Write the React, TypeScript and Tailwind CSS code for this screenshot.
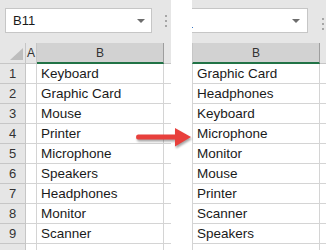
import React from 'react';

const before = ['Keyboard', 'Graphic Card', 'Mouse', 'Printer', 'Microphone', 'Speakers', 'Headphones', 'Monitor', 'Scanner', ''];
const after = ['Graphic Card', 'Headphones', 'Keyboard', 'Microphone', 'Monitor', 'Mouse', 'Printer', 'Scanner', 'Speakers', ''];

function Dots() {
  return (
    <div className="flex flex-col gap-[3px]">
      <span className="w-[2px] h-[2px] bg-[#a6a6a6]" />
      <span className="w-[2px] h-[2px] bg-[#a6a6a6]" />
      <span className="w-[2px] h-[2px] bg-[#a6a6a6]" />
    </div>
  );
}

function Caret() {
  return <span className="w-0 h-0 border-l-[4px] border-r-[4px] border-t-[4px] border-l-transparent border-r-transparent border-t-[#6d6d6d]" />;
}

export default function App() {
  return (
    <div
      className="relative w-[326px] h-[250px] overflow-hidden bg-white flex text-[#1a1a1a]"
      style={{ fontFamily: '"Liberation Sans", Arial, sans-serif' }}
    >
      {/* left sheet: original order */}
      <div className="w-[171px] flex flex-col">
        <div className="h-[43px] shrink-0 bg-[#e6e6e6] flex items-start pt-[8px] pl-[5px]">
          <div className="w-[147px] h-[25px] bg-white border border-[#c6c6c6] flex items-center justify-between pl-[7px] pr-[6px]">
            <span className="text-[13px]">B11</span>
            <Caret />
          </div>
          <div className="ml-[13px] mt-[7px]">
            <Dots />
          </div>
        </div>
        <div className="h-[21px] shrink-0 flex bg-[#e6e6e6] text-[12px] text-[#333]">
          <div className="w-[26px] border-r border-b border-[#c6c6c6] relative">
            <svg className="absolute right-[2px] bottom-[3px]" width="13" height="12" viewBox="0 0 13 12">
              <polygon points="13,0 13,12 0,12" fill="#bdbdbd" />
            </svg>
          </div>
          <div className="w-[11px] border-r border-b border-[#c6c6c6] flex items-center justify-center">A</div>
          <div className="w-[127px] bg-[#d2d2d2] border-r border-[#9e9e9e] border-b-2 border-b-[#217346] flex items-center justify-center">B</div>
          <div className="flex-1 border-b border-[#c6c6c6]" />
        </div>
        {before.map((t, i) => (
          <div key={i} className="h-[20px] flex shrink-0">
            <div className="w-[26px] bg-[#e6e6e6] border-r border-b border-[#c6c6c6] flex items-center justify-center text-[13px] text-[#333]">
              {i < 9 ? i + 1 : ''}
            </div>
            <div className="w-[11px] border-r border-b border-[#d4d4d4]" />
            <div className="w-[127px] border-r border-b border-[#d4d4d4] flex items-center pl-[4px] text-[13.5px] leading-none">
              {t}
            </div>
            <div className="flex-1 border-b border-[#d4d4d4]" />
          </div>
        ))}
      </div>

      <div className="w-[21px] shrink-0" />

      {/* right sheet: sorted */}
      <div className="flex-1 flex flex-col">
        <div className="h-[43px] shrink-0 bg-[#e6e6e6] flex items-start pt-[8px]">
          <div className="w-[116px] h-[25px] bg-white border border-l-0 border-[#c6c6c6] flex items-center justify-end pr-[7px] relative">
            <span className="absolute left-0 top-[18px] w-[1px] h-[1px] bg-[#3b78c4]" />
            <Caret />
          </div>
          <div className="ml-[14px] mt-[10px]">
            <Dots />
          </div>
        </div>
        <div className="h-[21px] shrink-0 flex bg-[#e6e6e6] text-[12px] text-[#333]">
          <div className="w-[128px] bg-[#d2d2d2] border-l border-[#c6c6c6] border-r border-r-[#9e9e9e] border-b-2 border-b-[#217346] flex items-center justify-center">B</div>
          <div className="flex-1 border-b border-[#c6c6c6]" />
        </div>
        {after.map((t, i) => (
          <div key={i} className="h-[20px] flex shrink-0">
            <div className="w-[128px] border-l border-r border-b border-[#d4d4d4] flex items-center pl-[4px] text-[13.5px] leading-none">
              {t}
            </div>
            <div className="flex-1 border-b border-[#d4d4d4]" />
          </div>
        ))}
      </div>

      {/* arrow overlay */}
      <svg
        className="absolute left-[135px] top-[126px] drop-shadow-[1px_2px_1px_rgba(0,0,0,0.35)]"
        width="58"
        height="24"
        viewBox="0 0 58 24"
      >
        <path d="M3 8.5 H40 V2 L56 11 L40 20.5 V13.5 H3 Q1 13.5 1 11 Q1 8.5 3 8.5 Z" fill="#e8403c" />
      </svg>
    </div>
  );
}
